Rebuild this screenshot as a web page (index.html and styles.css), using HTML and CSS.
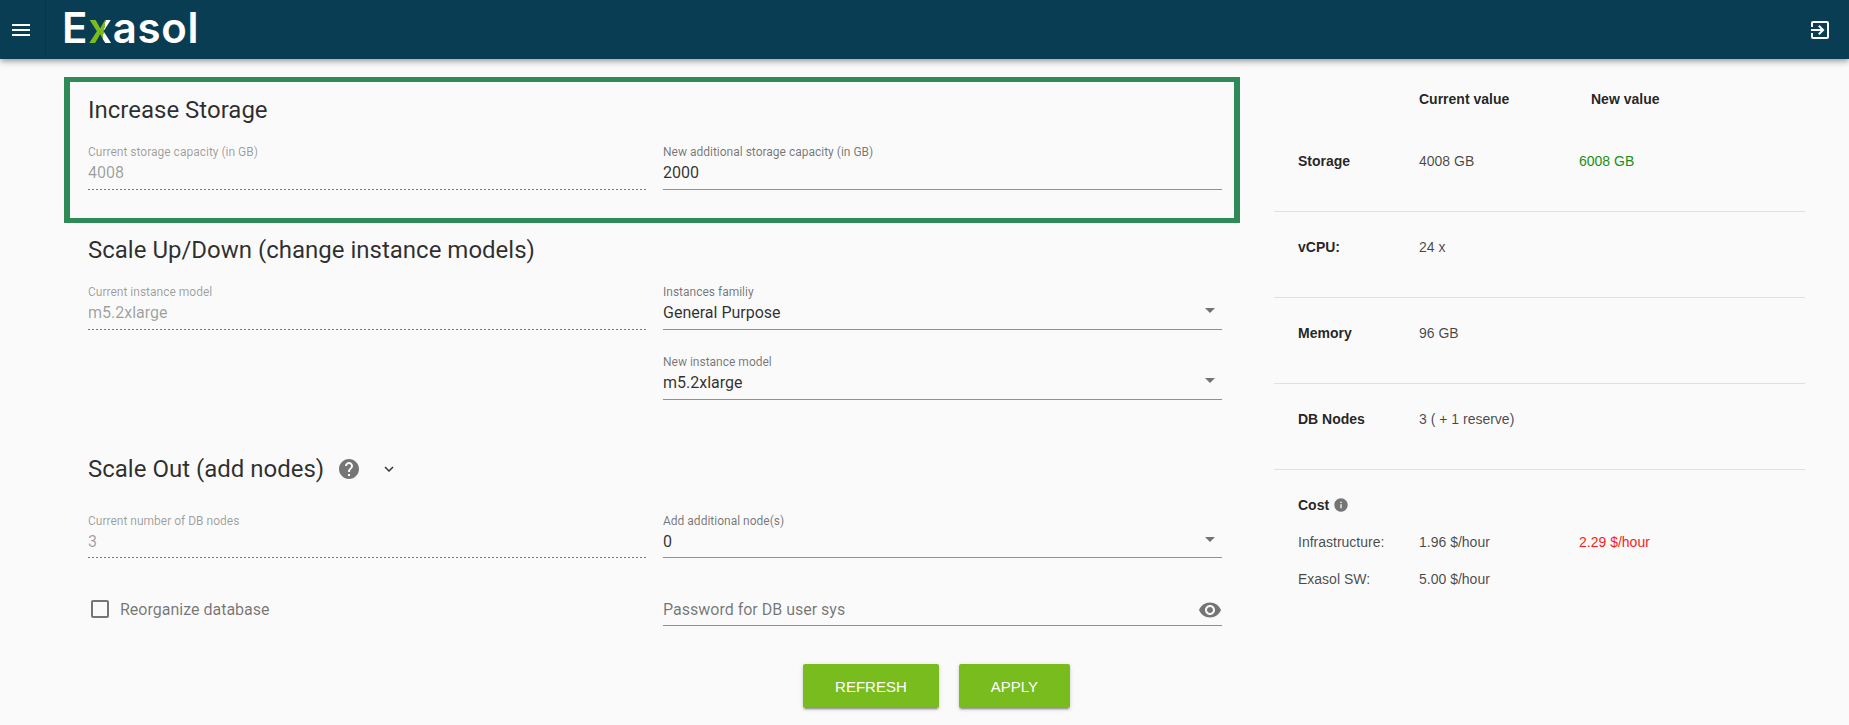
FILE: index.html
```html
<!DOCTYPE html>
<html lang="en">
<head>
<meta charset="utf-8">
<title>Exasol</title>
<link rel="stylesheet" href="styles.css">
</head>
<body>
<header class="topbar">
  <div class="menu-cell">
    <svg class="icon-24 white" viewBox="0 0 24 24"><path d="M3 18h18v-2H3v2zm0-5h18v-2H3v2zm0-7v2h18V6H3z"/></svg>
  </div>
  <div class="logo">E<span class="logo-x">x</span>asol</div>
  <svg class="icon-24 white exit" viewBox="0 0 24 24"><path d="M10.09 15.59L11.5 17l5-5-5-5-1.41 1.41L12.67 11H3v2h9.67l-2.58 2.59zM19 3H5c-1.11 0-2 .9-2 2v4h2V5h14v14H5v-4H3v4c0 1.1.89 2 2 2h14c1.1 0 2-.9 2-2V5c0-1.1-.9-2-2-2z"/></svg>
</header>

<main class="content">
  <div class="form">
    <section class="section highlight">
      <h2 class="heading">Increase Storage</h2>
      <div class="fields">
        <div class="field disabled"><div class="label">Current storage capacity (in GB)</div><div class="value">4008</div></div>
        <div class="field"><div class="label">New additional storage capacity (in GB)</div><div class="value">2000</div></div>
      </div>
    </section>

    <section class="section scale-up">
      <h2 class="heading">Scale Up/Down (change instance models)</h2>
      <div class="fields">
        <div class="field disabled"><div class="label">Current instance model</div><div class="value">m5.2xlarge</div></div>
        <div class="stack">
          <div class="field select"><div class="label">Instances familiy</div><div class="value">General Purpose</div><span class="arrow"></span></div>
          <div class="field select"><div class="label">New instance model</div><div class="value">m5.2xlarge</div><span class="arrow"></span></div>
        </div>
      </div>
    </section>

    <section class="section scale-out">
      <div class="heading-row">
        <h2 class="heading">Scale Out (add nodes)</h2>
        <svg class="icon-24 grey help" viewBox="0 0 24 24"><path d="M12 2C6.48 2 2 6.48 2 12s4.48 10 10 10 10-4.48 10-10S17.52 2 12 2zm1 17h-2v-2h2v2zm2.07-7.75l-.9.92C13.45 12.9 13 13.5 13 15h-2v-.5c0-1.1.45-2.1 1.17-2.83l1.24-1.26c.37-.36.59-.86.59-1.41 0-1.1-.9-2-2-2s-2 .9-2 2H8c0-2.21 1.79-4 4-4s4 1.79 4 4c0 .88-.36 1.68-.93 2.25z"/></svg>
        <svg class="chevron" viewBox="0 0 24 24"><path d="M7.41 8.59L12 13.17l4.59-4.58L18 10l-6 6-6-6 1.41-1.41z"/></svg>
      </div>
      <div class="fields nodes">
        <div class="field disabled"><div class="label">Current number of DB nodes</div><div class="value">3</div></div>
        <div class="field select"><div class="label">Add additional node(s)</div><div class="value">0</div><span class="arrow"></span></div>
      </div>
      <div class="fields second">
        <div class="check-row">
          <svg class="icon-24 grey" viewBox="0 0 24 24"><path d="M19 5v14H5V5h14m0-2H5c-1.1 0-2 .9-2 2v14c0 1.1.9 2 2 2h14c1.1 0 2-.9 2-2V5c0-1.1-.9-2-2-2z"/></svg>
          <span>Reorganize database</span>
        </div>
        <div class="field password">
          <div class="value placeholder">Password for DB user sys</div>
          <svg class="icon-24 grey eye" viewBox="0 0 24 24"><path d="M12 4.5C7 4.5 2.73 7.61 1 12c1.73 4.39 6 7.5 11 7.5s9.27-3.11 11-7.5c-1.73-4.39-6-7.5-11-7.5zM12 17c-2.76 0-5-2.24-5-5s2.24-5 5-5 5 2.24 5 5-2.24 5-5 5zm0-8c-1.66 0-3 1.34-3 3s1.34 3 3 3 3-1.34 3-3-1.34-3-3-3z"/></svg>
        </div>
      </div>
    </section>

    <div class="actions">
      <button class="btn">Refresh</button>
      <button class="btn">Apply</button>
    </div>
  </div>

  <aside class="summary">
    <div class="row head"><span></span><span>Current value</span><span class="new-head">New value</span></div>
    <div class="row line"><strong>Storage</strong><span>4008 GB</span><span class="up">6008 GB</span></div>
    <div class="row line"><strong>vCPU:</strong><span>24 x</span></div>
    <div class="row line"><strong>Memory</strong><span>96 GB</span></div>
    <div class="row line"><strong>DB Nodes</strong><span>3 ( + 1 reserve)</span></div>
    <div class="cost">
      <div class="cost-title"><strong>Cost</strong>
        <svg class="info" viewBox="0 0 24 24"><path d="M12 2C6.48 2 2 6.48 2 12s4.48 10 10 10 10-4.48 10-10S17.52 2 12 2zm1 15h-2v-6h2v6zm0-8h-2V7h2v2z"/></svg>
      </div>
      <div class="row cost-row"><span>Infrastructure:</span><span>1.96 $/hour</span><span class="down">2.29 $/hour</span></div>
      <div class="row cost-row"><span>Exasol SW:</span><span>5.00 $/hour</span></div>
    </div>
  </aside>
</main>
</body>
</html>
```
FILE: styles.css
```css
* { box-sizing: border-box; }
html, body { margin: 0; height: 725px; overflow: hidden; }
body { background: #fafafa; font-family: Roboto, sans-serif; color: rgba(0,0,0,.87); }

.icon-24 { width: 24px; height: 24px; display: block; flex: none; }
.white { fill: #fff; }
.grey { fill: #757575; }

.topbar {
  height: 59px; background: #093d54; display: flex; align-items: center;
  box-shadow: 0 2px 4px -1px rgba(0,0,0,.2), 0 4px 5px 0 rgba(0,0,0,.14), 0 1px 10px 0 rgba(0,0,0,.12);
  position: relative;
}
.menu-cell {
  width: 46px; height: 100%; display: flex; align-items: center; padding-left: 9px;
  border-right: 1px solid #083549;
}
.logo {
  margin-left: 16px; font-family: Inter, sans-serif; font-weight: 600; font-size: 42px; letter-spacing: 0.7px;
  line-height: 59px; color: #fff; position: relative; top: -2px;
}
.logo-x {
  background: linear-gradient(100deg, #78bc1e 62%, #fff 62%);
  -webkit-background-clip: text; background-clip: text; color: transparent;
}
.exit { margin-left: auto; margin-right: 17px; }

.content { display: flex; padding-left: 64px; }
.form { width: 1176px; padding-top: 18px; flex: none; }

.section { padding: 0 18px 0 24px; }
.highlight { border-style: solid; border-color: #2e8b57; border-width: 5px 6px; padding: 13px 12px 29px 18px; height: 146px; }
.heading { margin: 0; font-size: 24px; font-weight: 400; line-height: 30px; color: rgba(0,0,0,.82); }
.fields { display: grid; grid-template-columns: 559px 559px; column-gap: 16px; margin-top: 19px; align-items: start; }

.scale-up { padding-top: 12px; }
.stack { display: flex; flex-direction: column; gap: 24px; }

.scale-out { padding-top: 54px; }
.heading-row { display: flex; align-items: center; height: 30px; }
.help { margin-left: 13px; }
.chevron { width: 18px; height: 18px; margin-left: 19px; fill: #333; flex: none; }
.scale-out .nodes { margin-top: 29px; }
.nodes .field { height: 45px; }
.scale-out .second { margin-top: 22px; }

.field { position: relative; height: 46px; border-bottom: 1px solid rgba(0,0,0,.42); }
.label { font-size: 12px; line-height: 16px; color: rgba(0,0,0,.54); white-space: nowrap; }
.value { font-size: 16px; line-height: 24px; padding-top: 1px; color: rgba(0,0,0,.82); }
.disabled { border-bottom: 0; background: linear-gradient(to right, rgba(0,0,0,.5) 50%, transparent 0) left bottom / 4px 1px repeat-x; }
.disabled .label { color: rgba(0,0,0,.38); }
.disabled .value { color: rgba(0,0,0,.38); }
.arrow {
  position: absolute; right: 7px; top: 24px; width: 0; height: 0;
  border-left: 5px solid transparent; border-right: 5px solid transparent; border-top: 5px solid rgba(0,0,0,.54);
}
.password { padding-top: 17px; }
.placeholder { color: rgba(0,0,0,.54); }
.eye { position: absolute; right: 0; top: 18px; }
.check-row { display: flex; align-items: center; height: 24px; margin-top: 17px; font-size: 16px; color: rgba(0,0,0,.54); }
.check-row span { margin-left: 8px; }

.actions { display: flex; justify-content: flex-end; gap: 20px; margin-top: 38px; padding-right: 170px; }
.btn {
  height: 44px; padding: 0 32px; border: 0; border-radius: 2px; background: #78bc1e; color: #fff;
  font-family: "Liberation Sans", sans-serif; font-size: 15px; font-weight: 400; text-transform: uppercase;
  box-shadow: 0 3px 1px -2px rgba(0,0,0,.2), 0 2px 2px 0 rgba(0,0,0,.14), 0 1px 5px 0 rgba(0,0,0,.12);
}

.summary { width: 531px; margin-left: 34px; flex: none; font-family: "Liberation Sans", sans-serif; font-size: 14px; line-height: 20px; color: rgba(0,0,0,.72); }
.row { display: grid; grid-template-columns: 121px 160px 1fr; padding-left: 24px; }
.row strong, .cost-title strong, .head { font-weight: 700; color: rgba(0,0,0,.87); }
.head { padding-top: 30px; margin-bottom: 17px; }
.new-head { padding-left: 12px; }
.line { height: 86px; padding-top: 25px; border-bottom: 1px solid #e0e0e0; }
.up { color: #169116; }
.down { color: #fb1a1a; }
.cost { padding-top: 25px; }
.cost-title { display: flex; align-items: center; padding-left: 24px; }
.info { width: 16px; height: 16px; margin-left: 4px; fill: #757575; }
.cost-row { margin-top: 17px; }
```
